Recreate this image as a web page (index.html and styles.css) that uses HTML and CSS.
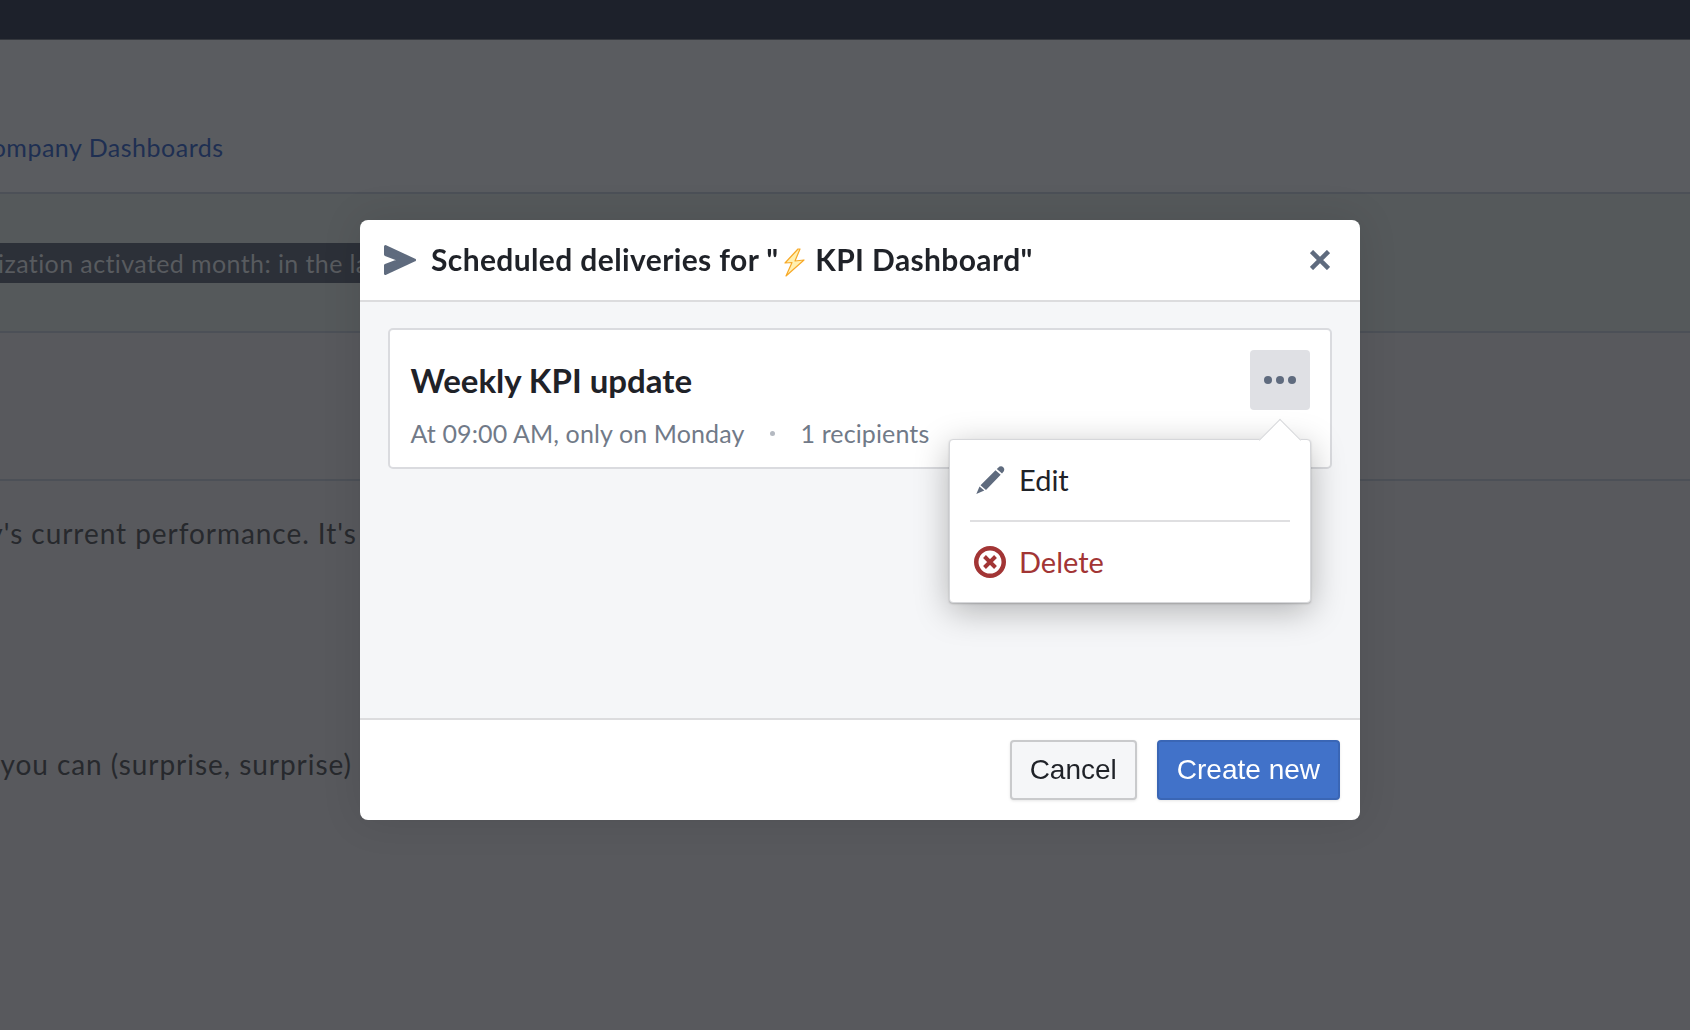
FILE: index.html
```html
<!DOCTYPE html>
<html lang="en">
<head>
    <meta charset="UTF-8">
    <meta name="viewport" content="width=device-width, initial-scale=1.0">
    <title>Scheduled deliveries</title>
    <link rel="stylesheet" href="styles.css">
</head>
<body>
    <div class="topbar"></div>
    <div class="page">
        <div class="row row-crumbs"><a class="crumb">Our Company Dashboards</a></div>
        <div class="row row-filter"><span class="code-line">First organization activated month: in the last year of data</span></div>
        <div class="row row-empty"></div>
        <div class="row-text row-first"><span>Here's a look at the company's current performance. It's</span></div>
        <div class="row-text row-second"><span>Click on anything and you can (surprise, surprise)</span></div>
    </div>

    <div class="overlay">
        <div class="modal">
            <div class="modal-header">
                <svg class="send-icon" width="32" height="30" viewBox="0 0 32 30">
                    <polygon points="1.5,1.5 30.5,15 1.5,28.5 1.5,20.5 16,15 1.5,9.5"/>
                </svg>
                <h2 class="modal-title">Scheduled deliveries for "<svg class="bolt" width="21" height="29" viewBox="0 0 21 29"><polygon points="14,1 1,15 8,14.500 2,28 20,12 11,13 16,1"/></svg> KPI Dashboard"</h2>
                <svg class="close-icon" width="20" height="20" viewBox="0 0 20 20">
                    <path d="M1.500 1.500 L18.500 18.500 M18.500 1.500 L1.500 18.500"/>
                </svg>
            </div>
            <div class="modal-body">
                <div class="card">
                    <div class="card-text">
                        <h3 class="card-title">Weekly KPI update</h3>
                        <p class="card-meta"><span>At 09:00 AM, only on Monday</span><span class="dot"></span><span>1 recipients</span></p>
                    </div>
                    <div class="more-button">
                        <span class="more-dot"></span><span class="more-dot"></span><span class="more-dot"></span>
                    </div>
                </div>
                <div class="popover">
                    <div class="popover-arrow"></div>
                    <div class="menu-item">
                        <svg class="menu-icon" width="32" height="32" viewBox="0 0 32 32">
                            <path class="pencil" d="M25.500 2.500 a3.400 3.400 0 0 1 4.500 4.500 l-2 2.500 -5.200 -4.400 z M21.500 6.300 l5.200 4.400 -14.700 15.300 -5.500 -4.700 z M5.500 22.400 l4.800 4.100 -8 3.500 z"/>
                        </svg>
                        <span class="menu-label">Edit</span>
                    </div>
                    <div class="menu-line"></div>
                    <div class="menu-item menu-delete">
                        <svg class="menu-icon" width="32" height="32" viewBox="0 0 32 32">
                            <circle cx="16" cy="16" r="13.750"/>
                            <path d="M10.500 10.500 L21.500 21.500 M21.500 10.500 L10.500 21.500"/>
                        </svg>
                        <span class="menu-label">Delete</span>
                    </div>
                </div>
            </div>
            <div class="modal-footer">
                <button class="btn">Cancel</button>
                <button class="btn btn-primary">Create new</button>
            </div>
        </div>
    </div>
</body>
</html>
```

FILE: styles.css
```css
html, body {
    margin: 0;
    height: 100%;
    overflow: hidden;
}
body {
    font-family: "Lato", sans-serif;
    background-color: #58595d;
    color: #2e3034;
}
.topbar {
    height: 40px;
    background-color: #1d212b;
    box-sizing: border-box;
    border-bottom: 1px solid #34373d;
}
.row {
    display: flex;
    box-sizing: border-box;
    border-bottom: 2px solid #4c5057;
    white-space: nowrap;
}
.page {
    overflow: hidden;
}
.row-crumbs {
    height: 154px;
    padding-top: 92px;
    background-color: #5a5c60;
}
.crumb {
    margin-left: -76px;
    color: #1e2f52;
    font-size: 25px;
    line-height: 30px;
    letter-spacing: 0.5px;
}
.row-filter {
    height: 139px;
    background-color: #55595b;
    padding-top: 49px;
}
.code-line {
    flex: none;
    margin-left: -124px;
    width: 484px;
    height: 40px;
    overflow: hidden;
    line-height: 40px;
    background-color: #2c3038;
    color: #585b5f;
    font-size: 25px;
    letter-spacing: 0.4px;
}
.row-empty {
    height: 148px;
}
.row-text {
    display: flex;
    white-space: nowrap;
    color: #27292d;
    font-size: 28px;
    line-height: 36px;
    letter-spacing: 0.95px;
}
.row-first {
    margin-left: -378px;
    padding-top: 34px;
}
.row-second {
    margin-left: -291px;
    padding-top: 195px;
}

.overlay {
    position: fixed;
    top: 0;
    left: 0;
    right: 0;
    bottom: 0;
    display: flex;
    align-items: flex-start;
    padding: 220px 0 0 360px;
}
.modal {
    width: 1000px;
    height: 600px;
    display: flex;
    flex-direction: column;
    background: white;
    border-radius: 8px;
    box-shadow: 0 0 40px rgba(0, 0, 0, 0.1);
}
.modal-header {
    height: 82px;
    box-sizing: border-box;
    display: flex;
    align-items: center;
    padding: 0 30px 0 24px;
    border-bottom: 2px solid #dcdcde;
}
.send-icon polygon {
    fill: #5f6b7e;
    stroke: #5f6b7e;
    stroke-width: 3;
    stroke-linejoin: round;
}
.modal-title {
    flex: 1;
    margin: 0 0 2px 15px;
    font-size: 30px;
    font-weight: 700;
    letter-spacing: 0.38px;
    color: #1f2228;
}
.bolt {
    vertical-align: -6px;
    margin: 0 3px 0 5px;
}
.bolt polygon {
    fill: #fff0b0;
    stroke: #f7a928;
    stroke-width: 1.200;
    stroke-linejoin: round;
}
.close-icon path {
    stroke: #5f6b7e;
    stroke-width: 4.500;
    fill: none;
}
.modal-body {
    flex: 1;
    position: relative;
    background-color: #f5f6f8;
    padding: 26px 28px 0 28px;
}
.card {
    height: 141px;
    box-sizing: border-box;
    display: flex;
    justify-content: space-between;
    background: white;
    border: 2px solid #dadbdf;
    border-radius: 5px;
    padding: 20px 20px 20px 20.500px;
}
.card-title {
    margin: 0;
    padding-top: 10px;
    font-size: 33px;
    line-height: 40px;
    font-weight: 700;
    color: #1f2228;
}
.card-meta {
    display: flex;
    align-items: center;
    margin: 17px 0 0 0;
    font-size: 25px;
    line-height: 32px;
    letter-spacing: 0.12px;
    color: #717a88;
}
.dot {
    width: 5px;
    height: 5px;
    margin: 0 25.500px;
    border-radius: 50%;
    background-color: #b4b9c1;
}
.more-button {
    width: 60px;
    height: 60px;
    display: flex;
    align-items: center;
    justify-content: center;
    gap: 4px;
    background-color: #dfe0e4;
    border-radius: 4px;
}
.more-dot {
    width: 8px;
    height: 8px;
    border-radius: 50%;
    background-color: #5f6b7e;
}
.popover {
    position: absolute;
    top: 137px;
    left: 589px;
    width: 362px;
    height: 164px;
    box-sizing: border-box;
    background: white;
    border-radius: 4px;
    border: 1px solid #d6d7da;
    box-shadow: 0 1px 2px rgba(0, 0, 0, 0.2), 0 8px 34px rgba(0, 0, 0, 0.28);
    padding: 0 20px;
}
.popover-arrow {
    position: absolute;
    top: -15px;
    left: 315px;
    width: 30px;
    height: 30px;
    box-sizing: border-box;
    background: white;
    border-top: 1px solid #d6d7da;
    border-left: 1px solid #d6d7da;
    transform: rotate(45deg);
}
.menu-item {
    position: relative;
    height: 80px;
    display: flex;
    align-items: center;
    gap: 13px;
    padding-left: 4px;
    font-size: 29px;
    color: #1f2228;
}
.menu-label {
    padding-bottom: 2px;
}
.menu-line {
    height: 2px;
    background-color: #dfdfe1;
}
.pencil {
    fill: #5f6b7e;
}
.menu-delete {
    color: #a23535;
}
.menu-delete circle {
    fill: none;
    stroke: #a23535;
    stroke-width: 4.500;
}
.menu-delete path {
    fill: none;
    stroke: #a23535;
    stroke-width: 4;
}
.modal-footer {
    height: 102px;
    box-sizing: border-box;
    display: flex;
    justify-content: flex-end;
    gap: 20px;
    padding: 20px 20px 0 0;
    border-top: 2px solid #dcdcde;
}
.btn {
    height: 60px;
    padding: 0 18px;
    font-family: "Liberation Sans", Arial, sans-serif;
    font-size: 28px;
    color: #1f2228;
    background-color: #f5f6f8;
    border: 2px solid #c9cacc;
    border-radius: 4px;
    box-shadow: 0 1px 3px rgba(0, 0, 0, 0.1);
}
.btn-primary {
    color: white;
    background-color: #4172c9;
    border-color: #3a66b5;
}
```
